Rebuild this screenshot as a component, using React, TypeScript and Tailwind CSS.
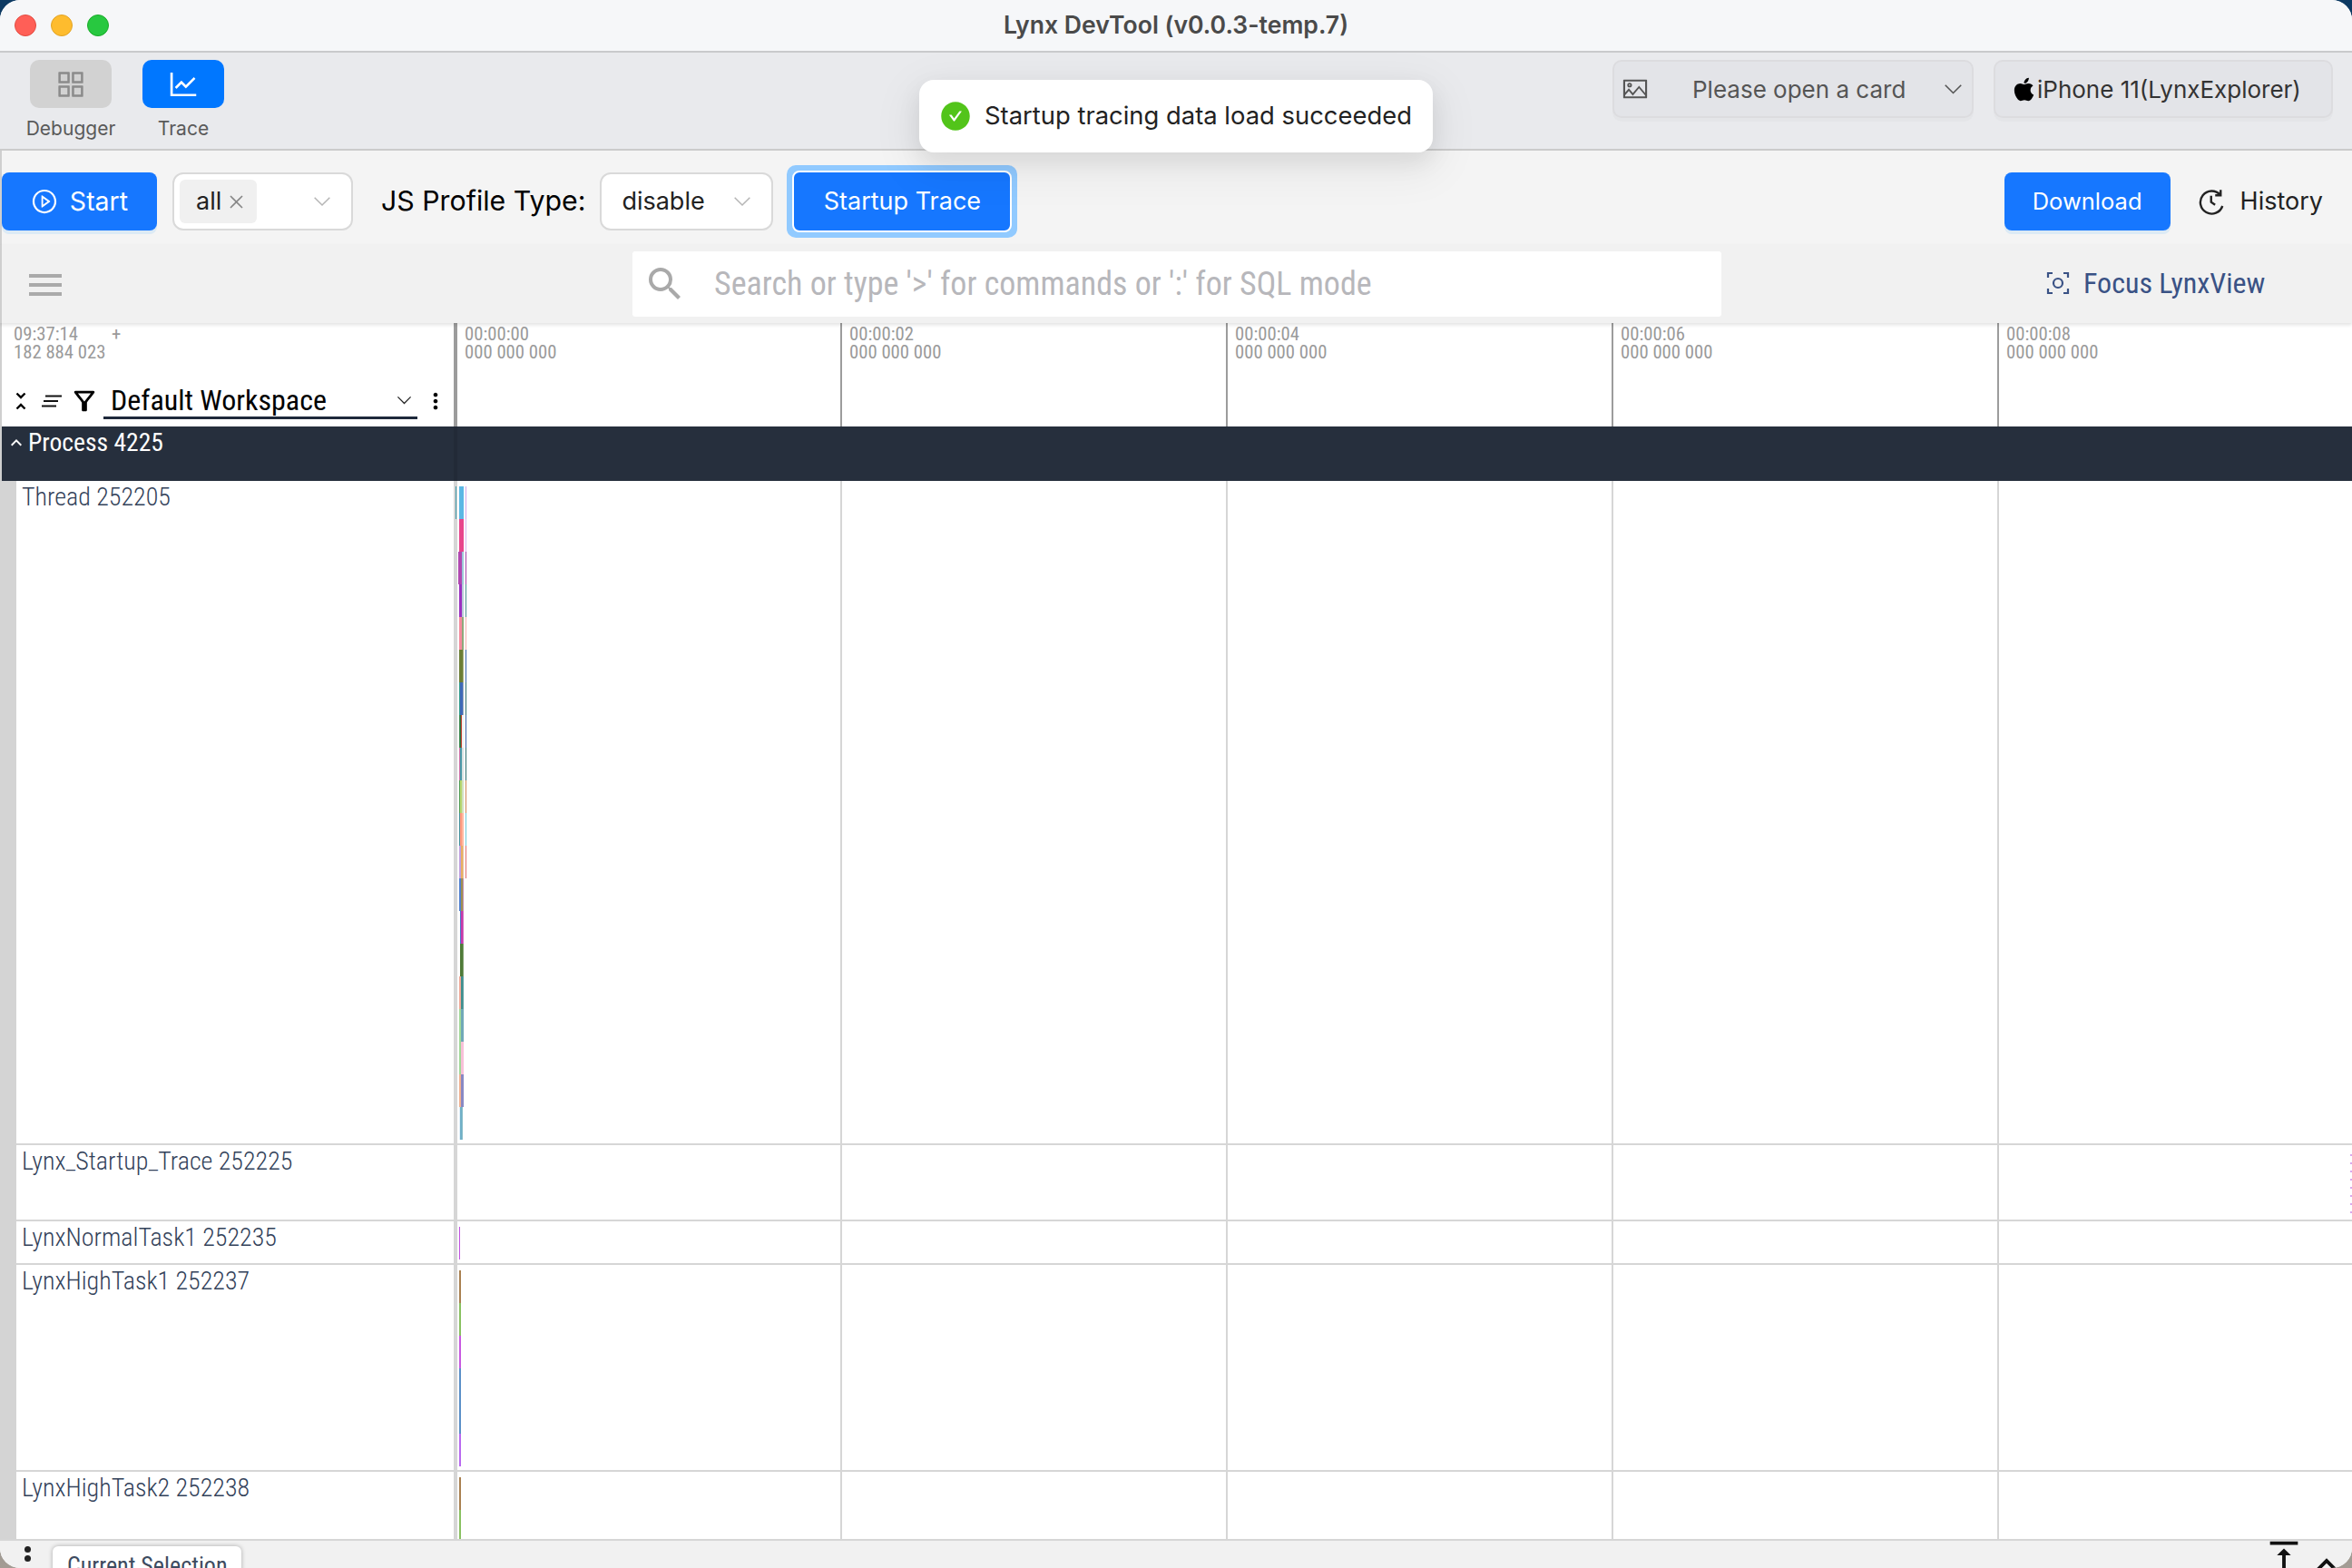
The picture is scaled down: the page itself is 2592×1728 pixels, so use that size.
import {
  AiFillCheckCircle,
  AiOutlineAppstore,
  AiOutlineClose,
  AiOutlineLineChart,
  AiOutlinePicture,
  AiOutlinePlayCircle,
} from "react-icons/ai";
import { FaApple } from "react-icons/fa";
import {
  MdExpandLess,
  MdMoreVert,
  MdOutlineFilterAlt,
  MdSearch,
  MdUnfoldLess,
  MdVerticalAlignTop,
} from "react-icons/md";

const ui = "font-['Inter','Liberation_Sans',sans-serif]";
const trace = "font-['Roboto','Liberation_Sans',sans-serif] [font-stretch:75%]";

type Slice = [number, number, string];

// one list per stack level, x is in page pixels minus the track start (500)
const threadLevels: Slice[][] = [
  [[2, 1, "#3d98a8"], [6, 5, "#5bb8e4"], [13, 1, "#d0a8e8"]],
  [[6, 5, "#e8458c"], [13, 1, "#d9b3ee"]],
  [[5, 4, "#b048b0"], [9, 2, "#9cc8d8"], [13, 1, "#a844a8"]],
  [[6, 3, "#9b30c0"], [9, 2, "#b8c8d8"], [13, 1, "#4a9090"]],
  [[6, 3, "#f58a9c"], [9, 2, "#8fa87c"], [13, 1, "#f6b0b0"]],
  [[6, 4, "#6b7d35"], [10, 1, "#a8b080"], [13, 1, "#3864a8"]],
  [[6, 1, "#2f9c8c"], [7, 3, "#3f68b8"], [10, 1, "#99aabb"], [13, 1, "#2f7070"]],
  [[6, 1, "#3c8a50"], [7, 1, "#2f6b40"], [8, 1, "#c04030"], [9, 2, "#f0f0f0"], [13, 1, "#3864a8"]],
  [[6, 1, "#d070a8"], [7, 2, "#4a9aa8"], [9, 2, "#d8e0e0"], [13, 1, "#2f7070"]],
  [[6, 1, "#4c9a50"], [7, 2, "#b8d870"], [9, 2, "#d0e0c0"], [13, 1, "#d08858"]],
  [[6, 1, "#3f8f9a"], [7, 2, "#ff9a80"], [9, 2, "#ffb8a0"], [13, 1, "#70c8d8"]],
  [[6, 2, "#c0a0e0"], [8, 2, "#e8b060"], [10, 1, "#e8c0a0"], [13, 1, "#e07070"]],
  [[6, 2, "#5080d0"], [8, 2, "#a09050"], [10, 1, "#c090b0"]],
  [[7, 1, "#4a78c8"], [8, 2, "#c838a8"], [10, 1, "#d070c0"]],
  [[7, 3, "#4f7a38"], [10, 1, "#80a070"]],
  [[6, 2, "#f0a898"], [8, 2, "#3f8f8f"], [10, 1, "#60a0a0"]],
  [[6, 2, "#a0d898"], [8, 3, "#70a8b8"]],
  [[6, 2, "#a0d898"], [8, 3, "#f8c0d8"]],
  [[6, 2, "#f0b090"], [8, 3, "#8888c4"]],
  [[6, 1, "#e0f0fa"], [7, 2, "#70b0c8"], [9, 1, "#88bcc8"]],
];

const ticks = [
  ["00:00:00", 426],
  ["00:00:02", 425],
  ["00:00:04", 425],
  ["00:00:06", 425],
  ["00:00:08", 391],
] as const;

function Chevron({ className = "" }: { className?: string }) {
  return (
    <svg viewBox="0 0 24 14" fill="none" stroke="currentColor" strokeWidth="1.8" className={className}>
      <path d="M2 2l10 10L22 2" />
    </svg>
  );
}

function FlameChart({ levels, height, top }: { levels: Slice[][]; height: number; top: number }) {
  return (
    <svg className="absolute left-0 top-0" width="20" height={height}>
      {levels.map((slices, i) =>
        slices.map(([x, w, color], j) => (
          <rect key={`${i}-${j}`} x={x} y={top + i * 36} width={w} height="36" fill={color} />
        )),
      )}
    </svg>
  );
}

function TrackRow({
  label,
  height,
  children,
}: {
  label: string;
  height: string;
  children?: React.ReactNode;
}) {
  return (
    <div className={`flex border-b-2 border-[#d6d6d6] ${height}`}>
      <div className={`w-[482px] shrink-0 pl-[6px] pt-[2px] text-[28px] font-light leading-[32px] text-[#33425a] ${trace}`}>
        {label}
      </div>
      <div className="relative flex flex-1 overflow-hidden">
        {ticks.map(([t, w], i) => (
          <div
            key={t}
            style={{ width: w }}
            className={`shrink-0 border-[#d6d6d6] ${i === 0 ? "border-l-4" : "border-l-2"}`}
          />
        ))}
        {children}
      </div>
    </div>
  );
}

export default function App() {
  return (
    <div className="relative h-[1728px] w-[2592px] overflow-hidden bg-gradient-to-b from-[#0d3a63] via-[#0d3a63] to-[#a39c94]">
      <div className={`relative flex h-full flex-col overflow-hidden rounded-[22px] bg-white ${ui}`}>
        {/* TITLE BAR */}
        <div className="relative flex h-[58px] shrink-0 items-center justify-center border-b-2 border-[#c9cacc] bg-[#f6f7f9]">
          <div className="absolute left-[16px] top-[16px] flex gap-[16px]">
            <span className="h-[24px] w-[24px] rounded-full border border-[#e24b41] bg-[#ff5f57]" />
            <span className="h-[24px] w-[24px] rounded-full border border-[#e1a325] bg-[#febc2e]" />
            <span className="h-[24px] w-[24px] rounded-full border border-[#1aab29] bg-[#28c840]" />
          </div>
          <span className="text-[26.6px] font-semibold text-[#4a4a4a]">Lynx DevTool (v0.0.3-temp.7)</span>
        </div>

        {/* TOP TOOLBAR */}
        <div className="flex h-[108px] shrink-0 items-start border-b-2 border-[#cbcbcb] bg-[#e9eaed] pl-[33px] pr-[21px] pt-[8px]">
          <div className="flex w-[90px] flex-col items-center">
            <div className="flex h-[53px] w-[90px] items-center justify-center rounded-[10px] bg-[#d2d2d2] text-[#8b8b8b]">
              <AiOutlineAppstore size={38} />
            </div>
            <span className="mt-[9px] whitespace-nowrap text-[21px] leading-[28px] text-[#5a5a5a]">Debugger</span>
          </div>
          <div className="ml-[34px] flex w-[90px] flex-col items-center">
            <div className="flex h-[53px] w-[90px] items-center justify-center rounded-[10px] bg-[#0077ff] text-white">
              <AiOutlineLineChart size={38} />
            </div>
            <span className="mt-[9px] text-[21px] leading-[28px] text-[#5a5a5a]">Trace</span>
          </div>

          <div className="ml-auto flex gap-[22px]">
            <div className="flex h-[64px] w-[398px] items-center rounded-[10px] border-2 border-[#dcdcdf] bg-[#e3e4e8] pl-[8px] pr-[10px] text-[#555] shadow-[0_4px_0_rgba(0,0,0,0.02)]">
              <AiOutlinePicture size={30} />
              <span className="ml-[48px] flex-1 text-[26px]">Please open a card</span>
              <Chevron className="w-[21px] text-[#555]" />
            </div>
            <div className="flex h-[64px] w-[374px] items-center rounded-[10px] border-2 border-[#dcdcdf] bg-[#e3e4e8] pl-[17px] text-[26px] text-[#333] shadow-[0_4px_0_rgba(0,0,0,0.02)]">
              <FaApple size={29} className="text-black" />
              <span>iPhone 11(LynxExplorer)</span>
            </div>
          </div>
        </div>

        {/* CONTROLS ROW */}
        <div className="flex h-[104px] shrink-0 items-start border-l-2 border-[#cfcfcf] bg-[#f4f4f4] pr-[32px] pt-[24px] text-[27px]">
          <button className="flex h-[64px] w-[171px] items-center justify-center gap-[13px] rounded-[8px] bg-[#1677ff] text-[28.5px] text-white shadow-[0_4px_0_rgba(5,145,255,0.1)]">
            <AiOutlinePlayCircle size={30} />
            <span>Start</span>
          </button>
          <div className="ml-[17px] flex h-[64px] w-[199px] items-center rounded-[12px] border-2 border-[#d9d9d9] bg-white pl-[6px] pr-[22px]">
            <span className="flex h-[48px] w-[85px] items-center gap-[6px] rounded-[6px] bg-[#f0f0f0] pl-[18px] text-[#222]">
              all
              <AiOutlineClose size={21} className="text-[#888]" />
            </span>
            <Chevron className="ml-auto w-[20px] text-[#b5b5b5]" />
          </div>
          <span className="ml-[31px] flex h-[64px] items-center text-[30.3px] text-black">JS Profile Type:</span>
          <div className="ml-[16px] flex h-[64px] w-[191px] items-center justify-between rounded-[12px] border-2 border-[#d9d9d9] bg-white pl-[22px] pr-[22px] text-[#222]">
            disable
            <Chevron className="w-[20px] text-[#b5b5b5]" />
          </div>
          <div className="ml-[15px] -mt-[8px] rounded-[10px] bg-[#91caff] p-[6px]">
            <button className="flex h-[68px] w-[242px] items-center justify-center rounded-[8px] border-2 border-white bg-[#1677ff] text-white">
              Startup Trace
            </button>
          </div>
          <button className="ml-auto flex h-[64px] w-[183px] items-center justify-center rounded-[8px] bg-[#1677ff] text-[25.5px] text-white shadow-[0_4px_0_rgba(5,145,255,0.1)]">
            Download
          </button>
          <div className="ml-[31px] flex h-[64px] items-center gap-[16px] text-[#222]">
            <svg viewBox="0 0 24 24" width="30" height="30" fill="none" stroke="#222" strokeWidth="1.9">
              <path d="M19 6.2A10 10 0 1 0 21 16" />
              <path d="M19.4 1.8v4.8h-4.8" />
              <path d="M11 7v5.5l3.5 2.5" />
            </svg>
            <span>History</span>
          </div>
        </div>

        {/* SEARCH ROW */}
        <div className="relative z-10 flex h-[86px] shrink-0 items-center border-l-2 border-[#cfcfcf] bg-[#f1f1f1] shadow-[0_2px_4px_rgba(0,0,0,0.12)]">
          <div className="ml-[30px] mt-[2px] flex w-[36px] flex-col gap-[6px]">
            <span className="h-[4px] bg-[#aaa]" />
            <span className="h-[4px] bg-[#aaa]" />
            <span className="h-[4px] bg-[#aaa]" />
          </div>
          <div className="ml-[629px] flex h-[72px] w-[1200px] items-center rounded-[3px] bg-white pl-[12px]">
            <MdSearch size={48} className="text-[#a9a9a9]" />
            <span className={`ml-[30px] text-[36px] text-[#b7b7bb] ${trace}`}>
              Search or type '&gt;' for commands or ':' for SQL mode
            </span>
          </div>
          <div className={`ml-[358px] -mt-[2px] flex items-center gap-[15px] text-[32px] text-[#3a5285] ${trace}`}>
            <svg viewBox="0 0 26 26" width="26" height="26" fill="none" stroke="#3a5285" strokeWidth="2.2">
              <path d="M7 2H2v5M19 2h5v5M7 24H2v-5M19 24h5v-5" />
              <circle cx="13" cy="13" r="5" />
            </svg>
            <span>Focus LynxView</span>
          </div>
        </div>

        {/* TIMELINE HEADER */}
        <div className="flex h-[114px] shrink-0 border-l-2 border-[#cfcfcf] bg-white">
          <div className={`relative w-[498px] shrink-0 ${trace}`}>
            <div className="pl-[13px] pt-[2px] text-[20.7px] leading-[20px] text-[#9a9a9a]">
              <div>
                09:37:14<span className="ml-[37px]">+</span>
              </div>
              <div>182 884 023</div>
            </div>
            <div className="mt-[24px] flex items-center pl-[7px] text-black">
              <MdUnfoldLess size={28} />
              <svg viewBox="0 0 24 14" width="24" height="14" className="ml-[8px]" fill="none" stroke="#111" strokeWidth="2">
                <path d="M5 1.5h18M3 7h16M1 12.5h16" />
              </svg>
              <MdOutlineFilterAlt size={34} className="ml-[7px]" />
              <div className="relative ml-[4px] flex h-[40px] w-[346px] items-center border-b-[3px] border-[#1e293b] pl-[8px] text-[32px]">
                <span>Default Workspace</span>
                <Chevron className="absolute right-[6px] top-[14px] w-[17px] text-[#222]" />
              </div>
              <MdMoreVert size={28} className="ml-[6px]" />
            </div>
          </div>
          <div className="flex flex-1">
            {ticks.map(([t, w], i) => (
              <div
                key={t}
                style={{ width: w }}
                className={`shrink-0 border-[#9c9c9c] pl-[8px] pt-[2px] text-[20.7px] leading-[20px] text-[#9a9a9a] ${i === 0 ? "border-l-4" : "border-l-2"} ${trace}`}
              >
                <div>{t}</div>
                <div>000 000 000</div>
              </div>
            ))}
          </div>
        </div>

        {/* PROCESS HEADER */}
        <div className={`flex h-[60px] shrink-0 border-l-2 border-[#cfcfcf] bg-[#262f3d] text-white ${trace}`}>
          <div className="flex w-[498px] items-start pl-[4px] pt-[3px] text-[27.6px] leading-[30px]">
            <MdExpandLess size={24} className="mt-[3px]" />
            <span className="ml-[1px]">Process 4225</span>
          </div>
          <div className="border-l-4 border-[#222a37]" />
        </div>

        {/* TRACKS */}
        <div className="flex min-h-0 flex-1">
          <div className="w-[18px] shrink-0 bg-[#d4d4d4]" />
          <div className="min-w-0 flex-1">
            <TrackRow label="Thread 252205" height="h-[732px]">
              <FlameChart levels={threadLevels} height={732} top={6} />
            </TrackRow>
            <TrackRow label="Lynx_Startup_Trace 252225" height="h-[84px]">
              <div className="absolute right-0 top-[10px] flex flex-col gap-[7px]">
                {[0, 1, 2, 3, 4, 5, 6, 7].map((n) => (
                  <span key={n} className="h-[2px] w-[2px] bg-[#d9a8ee]" />
                ))}
              </div>
            </TrackRow>
            <TrackRow label="LynxNormalTask1 252235" height="h-[48px]">
              <FlameChart levels={[[[6, 1, "#c050e0"]]]} height={46} top={6} />
            </TrackRow>
            <TrackRow label="LynxHighTask1 252237" height="h-[228px]">
              <FlameChart
                levels={[
                  [[6, 2, "#a98050"]],
                  [[6, 2, "#88c060"]],
                  [[6, 2, "#c858e0"]],
                  [[6, 2, "#5a8fc8"]],
                  [[6, 2, "#5a8fc8"]],
                  [[6, 2, "#b868f0"]],
                ]}
                height={226}
                top={6}
              />
            </TrackRow>
            <div className="[&>div]:border-b-0">
              <TrackRow label="LynxHighTask2 252238" height="h-[74px]">
                <FlameChart levels={[[[6, 2, "#a98050"]], [[6, 2, "#88c060"]]]} height={74} top={6} />
              </TrackRow>
            </div>
          </div>
        </div>

        {/* BOTTOM DRAWER */}
        <div className="relative flex h-[32px] shrink-0 items-start overflow-hidden border-t-2 border-[#d6d6d6] bg-[#f1f1f1]">
          <div className="ml-[27px] mt-[6px] flex flex-col gap-[3px]">
            <span className="h-[7px] w-[7px] rounded-full bg-[#222]" />
            <span className="h-[7px] w-[7px] rounded-full bg-[#222]" />
          </div>
          <div className={`ml-[24px] mt-[6px] h-[40px] w-[208px] rounded-t-[6px] bg-white pl-[16px] pt-[8px] text-[26px] leading-[26px] text-[#3d4b60] shadow-[0_0_5px_rgba(0,0,0,0.3)] ${trace}`}>
            Current Selection
          </div>
          <MdVerticalAlignTop size={46} className="absolute left-[2494px] top-[-5px] text-[#111]" />
          <MdExpandLess size={46} className="absolute left-[2541px] top-[4px] text-[#111]" />
        </div>

        {/* TOAST */}
        <div className="absolute left-[1013px] top-[88px] z-20 flex h-[80px] w-[566px] items-center rounded-[16px] bg-white pl-[22px] text-[27.4px] text-[#222] shadow-[0_10px_26px_rgba(0,0,0,0.08),0_14px_46px_12px_rgba(0,0,0,0.05)]">
          <AiFillCheckCircle size={36} className="text-[#52c41a]" />
          <span className="ml-[14px]">Startup tracing data load succeeded</span>
        </div>
      </div>
    </div>
  );
}
